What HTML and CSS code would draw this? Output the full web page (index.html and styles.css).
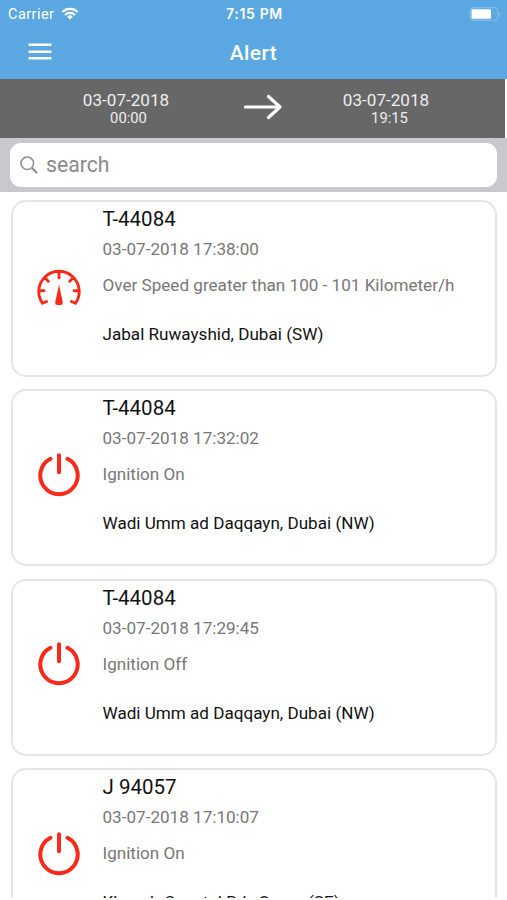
FILE: index.html
```html
<!DOCTYPE html>
<html lang="en">
<head>
    <meta charset="UTF-8">
    <meta name="viewport" content="width=device-width, initial-scale=1.0">
    <title>Alert</title>
    <link rel="stylesheet" href="styles.css">
</head>
<body>
    <!-- shared icons -->
    <svg class="icon-defs">
        <symbol id="power" viewBox="0 0 44 44">
            <path d="M13.500 5.800A18.700 18.700 0 1 0 30.500 5.800M22 2.300V19.300" fill="none" stroke="currentColor" stroke-width="4" stroke-linecap="round"/>
        </symbol>
        <symbol id="gauge" viewBox="0 0 44 44">
            <path d="M9.500 37.500L5.600 39.300A20.200 20.200 0 1 1 38.400 39.300L34.500 37.500M22 8.500V14M8.300 14.300L11.300 17.300M35.700 14.300L32.700 17.300M2.500 26.800H7M41.500 26.800H37" fill="none" stroke="currentColor" stroke-width="2.900" stroke-linecap="round" stroke-linejoin="round"/>
            <path d="M22 20.500L25.800 38.500Q26 41 23.800 41H20.200Q18 41 18.200 38.500Z" fill="currentColor"/>
        </symbol>
    </svg>

    <div class="screen">
        <header class="header">
            <div class="status-bar">
                <div class="carrier">
                    <span>Carrier</span>
                    <svg class="wifi" viewBox="0 0 18 13">
                        <path d="M1.300 5A11 11 0 0 1 16.700 5M4 8A7 7 0 0 1 14 8" fill="none" stroke="#fff" stroke-width="2.200"/>
                        <path d="M9 12.500L6.200 9.700A4 4 0 0 1 11.800 9.700Z" fill="#fff"/>
                    </svg>
                </div>
                <span class="clock">7:15 PM</span>
                <svg class="battery" viewBox="0 0 32 14">
                    <rect x="1" y=".8" width="28" height="12.400" rx="3" fill="none" stroke="#8fc3ec"/>
                    <rect x="2.500" y="2.300" width="19.500" height="9.400" rx="1" fill="#fff"/>
                    <path d="M30 5Q32 7 30 9Z" fill="#8fc3ec"/>
                </svg>
            </div>
            <div class="nav-bar">
                <button class="menu-btn" aria-label="Menu">
                    <svg viewBox="0 0 24 18">
                        <path d="M.5 1.700H23.500M.5 8.700H23.500M.5 15.300H23.500" stroke="#fff" stroke-width="2.600"/>
                    </svg>
                </button>
                <h1>Alert</h1>
            </div>
        </header>

        <div class="date-range">
            <div class="date">
                <div class="day">03-07-2018</div>
                <div class="time">00:00</div>
            </div>
            <svg class="arrow" viewBox="0 0 38 26">
                <path d="M1.500 13H36M24.500 2.500L36 13L24.500 23.500" fill="none" stroke="#fff" stroke-width="3.200" stroke-linecap="round" stroke-linejoin="round"/>
            </svg>
            <div class="date date-to">
                <div class="day">03-07-2018</div>
                <div class="time">19:15</div>
            </div>
        </div>

        <div class="search">
            <label class="search-box">
                <svg viewBox="0 0 18 18">
                    <path d="M12 12L17 17" stroke="#8e8e93" stroke-width="2.200"/>
                    <circle cx="7.300" cy="7.300" r="6.300" fill="none" stroke="#8e8e93" stroke-width="1.500"/>
                </svg>
                <input type="text" placeholder="search">
            </label>
        </div>

        <main class="alerts">
            <div class="card">
                <svg class="card-icon"><use href="#gauge"/></svg>
                <div class="card-body">
                    <h2>T-44084</h2>
                    <p class="stamp">03-07-2018 17:38:00</p>
                    <p class="event">Over Speed greater than 100 - 101 Kilometer/h</p>
                    <p class="place">Jabal Ruwayshid, Dubai (SW)</p>
                </div>
            </div>
            <div class="card">
                <svg class="card-icon"><use href="#power"/></svg>
                <div class="card-body">
                    <h2>T-44084</h2>
                    <p class="stamp">03-07-2018 17:32:02</p>
                    <p class="event">Ignition On</p>
                    <p class="place">Wadi Umm ad Daqqayn, Dubai (NW)</p>
                </div>
            </div>
            <div class="card">
                <svg class="card-icon"><use href="#power"/></svg>
                <div class="card-body">
                    <h2>T-44084</h2>
                    <p class="stamp">03-07-2018 17:29:45</p>
                    <p class="event">Ignition Off</p>
                    <p class="place">Wadi Umm ad Daqqayn, Dubai (NW)</p>
                </div>
            </div>
            <div class="card">
                <svg class="card-icon"><use href="#power"/></svg>
                <div class="card-body">
                    <h2>J 94057</h2>
                    <p class="stamp">03-07-2018 17:10:07</p>
                    <p class="event">Ignition On</p>
                    <p class="place">Khasab Coastal Rd,&nbsp; Oman (SE)</p>
                </div>
            </div>
        </main>
    </div>
</body>
</html>
```
FILE: styles.css
```css
* {
    box-sizing: border-box;
}
body {
    margin: 0;
    background: #fff;
    font-family: Roboto, "Liberation Sans", sans-serif;
    overflow: hidden;
}
h1, h2, p {
    margin: 0;
    font-weight: 400;
}
.icon-defs {
    display: none;
}
.screen {
    height: 898px;
    overflow: hidden;
}

/* header */
.header {
    height: 79px;
    background: #5ba7e1;
    color: #fff;
}
.status-bar {
    display: grid;
    grid-template-columns: 1fr auto 1fr;
    align-items: center;
    height: 27px;
    padding: 0 6px 0 8px;
}
.carrier {
    display: flex;
    align-items: center;
    gap: 7px;
    font-size: 14.5px;
    letter-spacing: 0.45px;
}
.carrier span {
    padding-top: 1px;
}
.wifi {
    width: 18px;
    height: 13px;
}
.clock {
    font-family: Inter, Roboto, sans-serif;
    font-size: 14px;
    font-weight: 600;
    letter-spacing: 0.65px;
}
.battery {
    width: 32px;
    height: 14px;
    justify-self: end;
}
.nav-bar {
    display: grid;
    grid-template-columns: 60px 1fr 60px;
    align-items: center;
    height: 50px;
}
.menu-btn {
    display: flex;
    padding: 0 0 0 28px;
    border: 0;
    background: none;
}
.menu-btn svg {
    width: 24px;
    height: 18px;
}
.nav-bar h1 {
    padding-top: 1px;
    font-size: 21px;
    font-weight: 500;
    letter-spacing: 0.4px;
    text-align: center;
}

/* date range */
.date-range {
    display: grid;
    grid-template-columns: 244px 38px 1fr;
    align-items: center;
    width: 505px;
    height: 59px;
    background: #676767;
    color: #eee;
    text-align: center;
}
.date {
    padding-left: 8px;
}
.date-to {
    padding: 0 15px 0 0;
}
.day {
    font-size: 17.1px;
    line-height: 20px;
}
.time {
    padding-left: 5px;
    font-size: 14.8px;
    line-height: 17px;
}
.date-to .time {
    padding-left: 7px;
}
.arrow {
    width: 38px;
    height: 26px;
    margin-top: -4px;
}

/* search */
.search {
    height: 54px;
    padding: 5px 10px;
    background: #c8c8cd;
}
.search-box {
    display: flex;
    align-items: center;
    gap: 8px;
    height: 44px;
    padding: 0 10px;
    border-radius: 11px;
    background: #fff;
}
.search-box svg {
    width: 18px;
    height: 18px;
}
.search-box input {
    flex: 1;
    padding: 0;
    border: 0;
    outline: 0;
    margin-top: -2px;
    font: 21.2px Roboto, sans-serif;
}
.search-box input::placeholder {
    color: #8a8a8a;
}

/* alert list */
.alerts {
    display: flex;
    flex-direction: column;
    gap: 12.4px;
    padding: 8px 10px 0 11px;
}
.card {
    display: flex;
    flex: none;
    height: 177px;
    border: 2px solid #e5e5e7;
    border-radius: 15px;
}
.card-icon {
    flex: none;
    align-self: center;
    width: 44px;
    height: 44px;
    margin: 0 21.5px 6px 24px;
    color: #f92a1c;
}
.card-body {
    padding-top: 5px;
    white-space: nowrap;
}
.card-body h2 {
    font-size: 20.5px;
    line-height: 24px;
    color: #111;
}
.stamp,
.event {
    font-size: 17.1px;
    line-height: 36px;
    color: #777;
}
.place {
    margin-top: 20px;
    font-size: 17.1px;
    line-height: 22px;
    color: #111;
}
```
